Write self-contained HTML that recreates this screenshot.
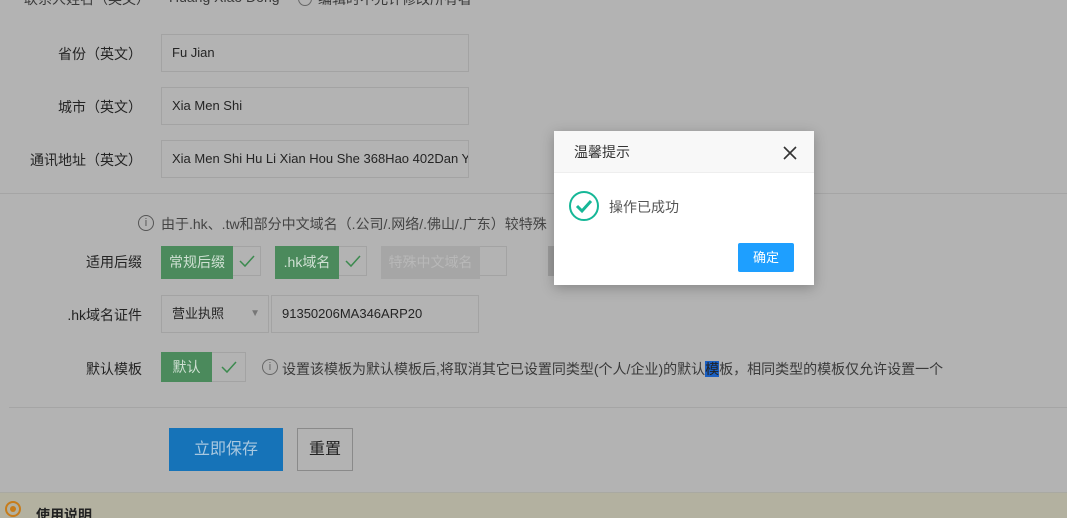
<!DOCTYPE html>
<html><head><meta charset="utf-8"><style>
*{margin:0;padding:0;box-sizing:border-box}
html,body{width:1067px;height:518px;overflow:hidden}
body{background:#b3b3b3;font-family:"Liberation Sans","Noto Sans CJK SC",sans-serif;font-size:13px;color:#242424;position:relative}
.a{position:absolute;white-space:nowrap}
.lbl{position:absolute;right:925px;text-align:right;color:#242424;font-size:14px;white-space:nowrap}
.inp{position:absolute;border:1px solid #a3a3a3;background:#b3b3b3;padding-left:10px;line-height:36px;color:#242424;overflow:hidden;white-space:nowrap}
.g{position:absolute;background:#4b8a5c;color:#cfe0d3;line-height:33px;text-align:center;font-size:14px;white-space:nowrap;overflow:hidden}
.ck{position:absolute;border:1px solid #a3a3a3;border-left:none}
.ck svg{position:absolute;left:50%;top:50%;margin:-7px 0 0 -9px}
</style></head><body>
<div class="a" style="left:24px;top:-11px;color:#3a3a3a;font-size:14px">联系人姓名（英文）</div>
<div class="a" style="left:169px;top:-11px;color:#3a3a3a;font-size:14px">Huang Xiao Dong</div>
<div class="a" style="left:298px;top:-8px;width:14px;height:14px;border:1px solid #666;border-radius:50%"></div>
<div class="a" style="left:318px;top:-11px;color:#3a3a3a;font-size:14px">编辑时不允许修改所有者</div>

<div class="lbl" style="top:44px">省份（英文）</div>
<div class="inp" style="left:161px;top:34px;width:308px;height:38px">Fu Jian</div>
<div class="lbl" style="top:97px">城市（英文）</div>
<div class="inp" style="left:161px;top:87px;width:308px;height:38px">Xia Men Shi</div>
<div class="lbl" style="top:150px">通讯地址（英文）</div>
<div class="inp" style="left:161px;top:140px;width:308px;height:38px">Xia Men Shi Hu Li Xian Hou She 368Hao 402Dan Y</div>
<div class="a" style="left:0;top:193px;width:1067px;height:1px;background:#a5a5a5"></div>

<div class="a" style="left:138px;top:215px;width:16px;height:16px;border:1px solid #555;border-radius:50%;font-size:11px;text-align:center;line-height:14px;color:#555">i</div>
<div class="a" style="left:161px;top:214px;color:#444;font-size:14px">由于.hk、.tw和部分中文域名（.公司/.网络/.佛山/.广东）较特殊</div>

<div class="lbl" style="top:252px">适用后缀</div>
<div class="g" style="left:161px;top:246px;width:72px">常规后缀</div>
<div class="ck" style="left:233px;top:246px;width:28px;height:30px"><svg width="18" height="14"><path d="M2 7l5 5 9-10" fill="none" stroke="#3c8a4f" stroke-width="1.5"/></svg></div>
<div class="g" style="left:275px;top:246px;width:64px">.hk域名</div>
<div class="ck" style="left:339px;top:246px;width:28px;height:30px"><svg width="18" height="14"><path d="M2 7l5 5 9-10" fill="none" stroke="#3c8a4f" stroke-width="1.5"/></svg></div>
<div class="g" style="left:381px;top:246px;width:99px;background:#a6a6a6;color:#b8b8b8">特殊中文域名</div>
<div class="ck" style="left:480px;top:246px;width:27px;height:30px;background:#b3b3b3"></div>
<div class="a" style="left:548px;top:246px;width:10px;height:30px;background:#9a9a9a"></div>

<div class="lbl" style="top:305px">.hk域名证件</div>
<div class="inp" style="left:161px;top:295px;width:108px;height:38px;font-size:13px">营业执照<span style="position:absolute;right:8px;top:0;font-size:10px;color:#777">▼</span></div>
<div class="inp" style="left:271px;top:295px;width:208px;height:38px">91350206MA346ARP20</div>

<div class="lbl" style="top:359px">默认模板</div>
<div class="g" style="left:161px;top:352px;width:51px;height:30px;line-height:30px">默认</div>
<div class="ck" style="left:212px;top:352px;width:34px;height:30px"><svg width="18" height="14"><path d="M2 7l5 5 9-10" fill="none" stroke="#3c8a4f" stroke-width="1.5"/></svg></div>
<div class="a" style="left:262px;top:359px;width:16px;height:16px;border:1px solid #666;border-radius:50%;font-size:11px;text-align:center;line-height:14px;color:#666">i</div>
<div class="a" style="left:282px;top:359px;color:#3a3a3a;font-size:14px">设置该模板为默认模板后,将取消其它已设置同类型(个人/企业)的默认<span style="background:#1a5fc2;color:#222">模</span>板，相同类型的模板仅允许设置一个</div>
<div class="a" style="left:9px;top:407px;width:1058px;height:1px;background:#a5a5a5"></div>

<div class="a" style="left:169px;top:428px;width:114px;height:43px;background:#1673b8;color:#a9c8e0;font-size:16px;text-align:center;line-height:43px">立即保存</div>
<div class="a" style="left:297px;top:428px;width:56px;height:43px;border:1px solid #8a8a8a;color:#222;font-size:16px;text-align:center;line-height:41px">重置</div>

<div class="a" style="left:0;top:492px;width:1067px;height:26px;background:#b3b1a0;border-top:1px solid #a9a9a2"></div>
<div class="a" style="left:5px;top:501px;width:16px;height:16px;border:2px solid #c77c1a;border-radius:50%;background:#b3b1a0"><div style="margin:3px;width:6px;height:6px;border-radius:50%;background:#c77c1a"></div></div>
<div class="a" style="left:36px;top:505px;font-weight:bold;font-size:14px;color:#222">使用说明</div>

<div class="a" style="left:554px;top:131px;width:260px;height:154px;background:#fff;box-shadow:0 3px 12px rgba(0,0,0,.25)">
 <div style="height:42px;background:#f8f8f8;border-bottom:1px solid #eee;padding-left:20px;line-height:42px;font-size:14px;color:#333">温馨提示</div>
 <svg style="position:absolute;left:229px;top:15px" width="14" height="14" viewBox="0 0 14 14"><path d="M1 1L13 13M13 1L1 13" stroke="#333" stroke-width="1.6"/></svg>
 <svg style="position:absolute;left:14px;top:59px" width="32" height="32" viewBox="0 0 32 32"><circle cx="16" cy="16" r="14" fill="none" stroke="#16b797" stroke-width="2"/><path d="M9 16l5 5 9-10" fill="none" stroke="#16b797" stroke-width="3"/></svg>
 <div style="position:absolute;left:55px;top:66px;font-size:14px;color:#555">操作已成功</div>
 <div style="position:absolute;left:184px;top:112px;width:56px;height:29px;background:#1e9fff;color:#fff;border-radius:2px;text-align:center;line-height:29px;font-size:13px">确定</div>
</div>
</body></html>
